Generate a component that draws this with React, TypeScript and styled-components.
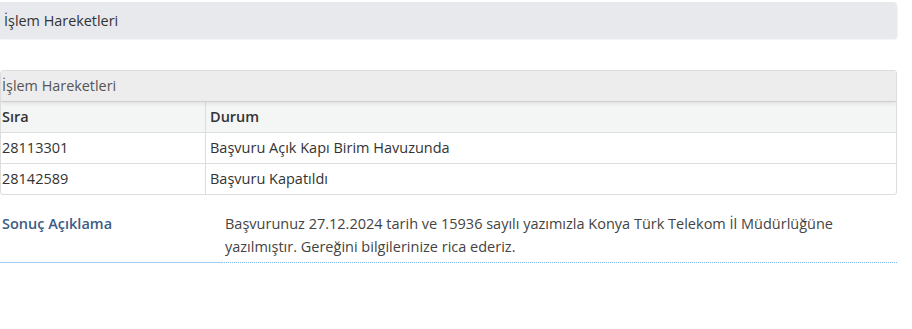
import React from 'react';
import styled, { createGlobalStyle } from 'styled-components';

const GlobalStyle = createGlobalStyle`
  body {
    margin: 0;
    background: #fff;
    font-family: "Open Sans", "Liberation Sans", sans-serif;
    font-size: 14.5px;
    color: #333;
  }
`;

const Page = styled.div`
  width: 897px;
  padding-top: 2px;
  display: flex;
  flex-direction: column;
`;

const TitleBar = styled.div`
  height: 37px;
  display: flex;
  align-items: center;
  padding-left: 4px;
  background: #e7e9ec;
  border-radius: 0 4px 4px 0;
  box-shadow: 1px 1px 1px rgba(0, 0, 0, 0.05);
  font-size: 14.4px;
  color: #333;
`;

const Panel = styled.div`
  margin-top: 31px;
  border: 1px solid #ddd;
  border-radius: 3px;
  overflow: hidden;
`;

const PanelHeading = styled.div`
  position: relative;
  height: 31px;
  display: flex;
  align-items: center;
  padding: 0 0 2px 1px;
  box-sizing: border-box;
  background: #ededed;
  border-bottom: 1px solid #cfcfcf;
  box-shadow: 0 2px 4px rgba(0, 0, 0, 0.08);
  color: #555;
  font-size: 14.4px;
`;

const Table = styled.table`
  width: 100%;
  border-collapse: collapse;
`;

const HeadCell = styled.th`
  height: 28px;
  padding: 0 4px 2px;
  text-align: left;
  font-weight: 600;
  background: #f4f6f5;
  color: #333;
  border-bottom: 1px solid #ddd;
  &:first-child {
    width: 199px;
    padding-left: 1px;
    border-right: 1px solid #ddd;
  }
`;

const Cell = styled.td`
  height: 28px;
  padding: 0 4px 2px;
  color: #333;
  border-top: 1px solid #ddd;
  &:first-child {
    padding-left: 1px;
    border-right: 1px solid #ddd;
  }
`;

const Details = styled.div`
  margin-top: 17px;
  display: grid;
  grid-template-columns: 222px 1fr;
`;

const Term = styled.div`
  padding: 1px 2px 16px;
  font-weight: 600;
  color: #3d5c84;
  border-bottom: 1px solid #a3cbee;
  line-height: 22px;
`;

const Desc = styled.div`
  padding: 0 5px 4px 3px;
  font-size: 14.5px;
  color: #444;
  line-height: 23px;
  border-bottom: 1px dotted #7db6ea;
`;

const rows = [
  { sira: '28113301', durum: 'Başvuru Açık Kapı Birim Havuzunda' },
  { sira: '28142589', durum: 'Başvuru Kapatıldı' },
];

export default function App() {
  return (
    <>
      <GlobalStyle />
      <Page>
        <TitleBar>İşlem Hareketleri</TitleBar>
        <Panel>
          <PanelHeading>İşlem Hareketleri</PanelHeading>
          <Table>
            <thead>
              <tr>
                <HeadCell>Sıra</HeadCell>
                <HeadCell>Durum</HeadCell>
              </tr>
            </thead>
            <tbody>
              {rows.map((r) => (
                <tr key={r.sira}>
                  <Cell>{r.sira}</Cell>
                  <Cell>{r.durum}</Cell>
                </tr>
              ))}
            </tbody>
          </Table>
        </Panel>
        <Details>
          <Term>Sonuç Açıklama</Term>
          <Desc>
            Başvurunuz 27.12.2024 tarih ve 15936 sayılı yazımızla Konya Türk Telekom İl Müdürlüğüne
            yazılmıştır. Gereğini bilgilerinize rica ederiz.
          </Desc>
        </Details>
      </Page>
    </>
  );
}
